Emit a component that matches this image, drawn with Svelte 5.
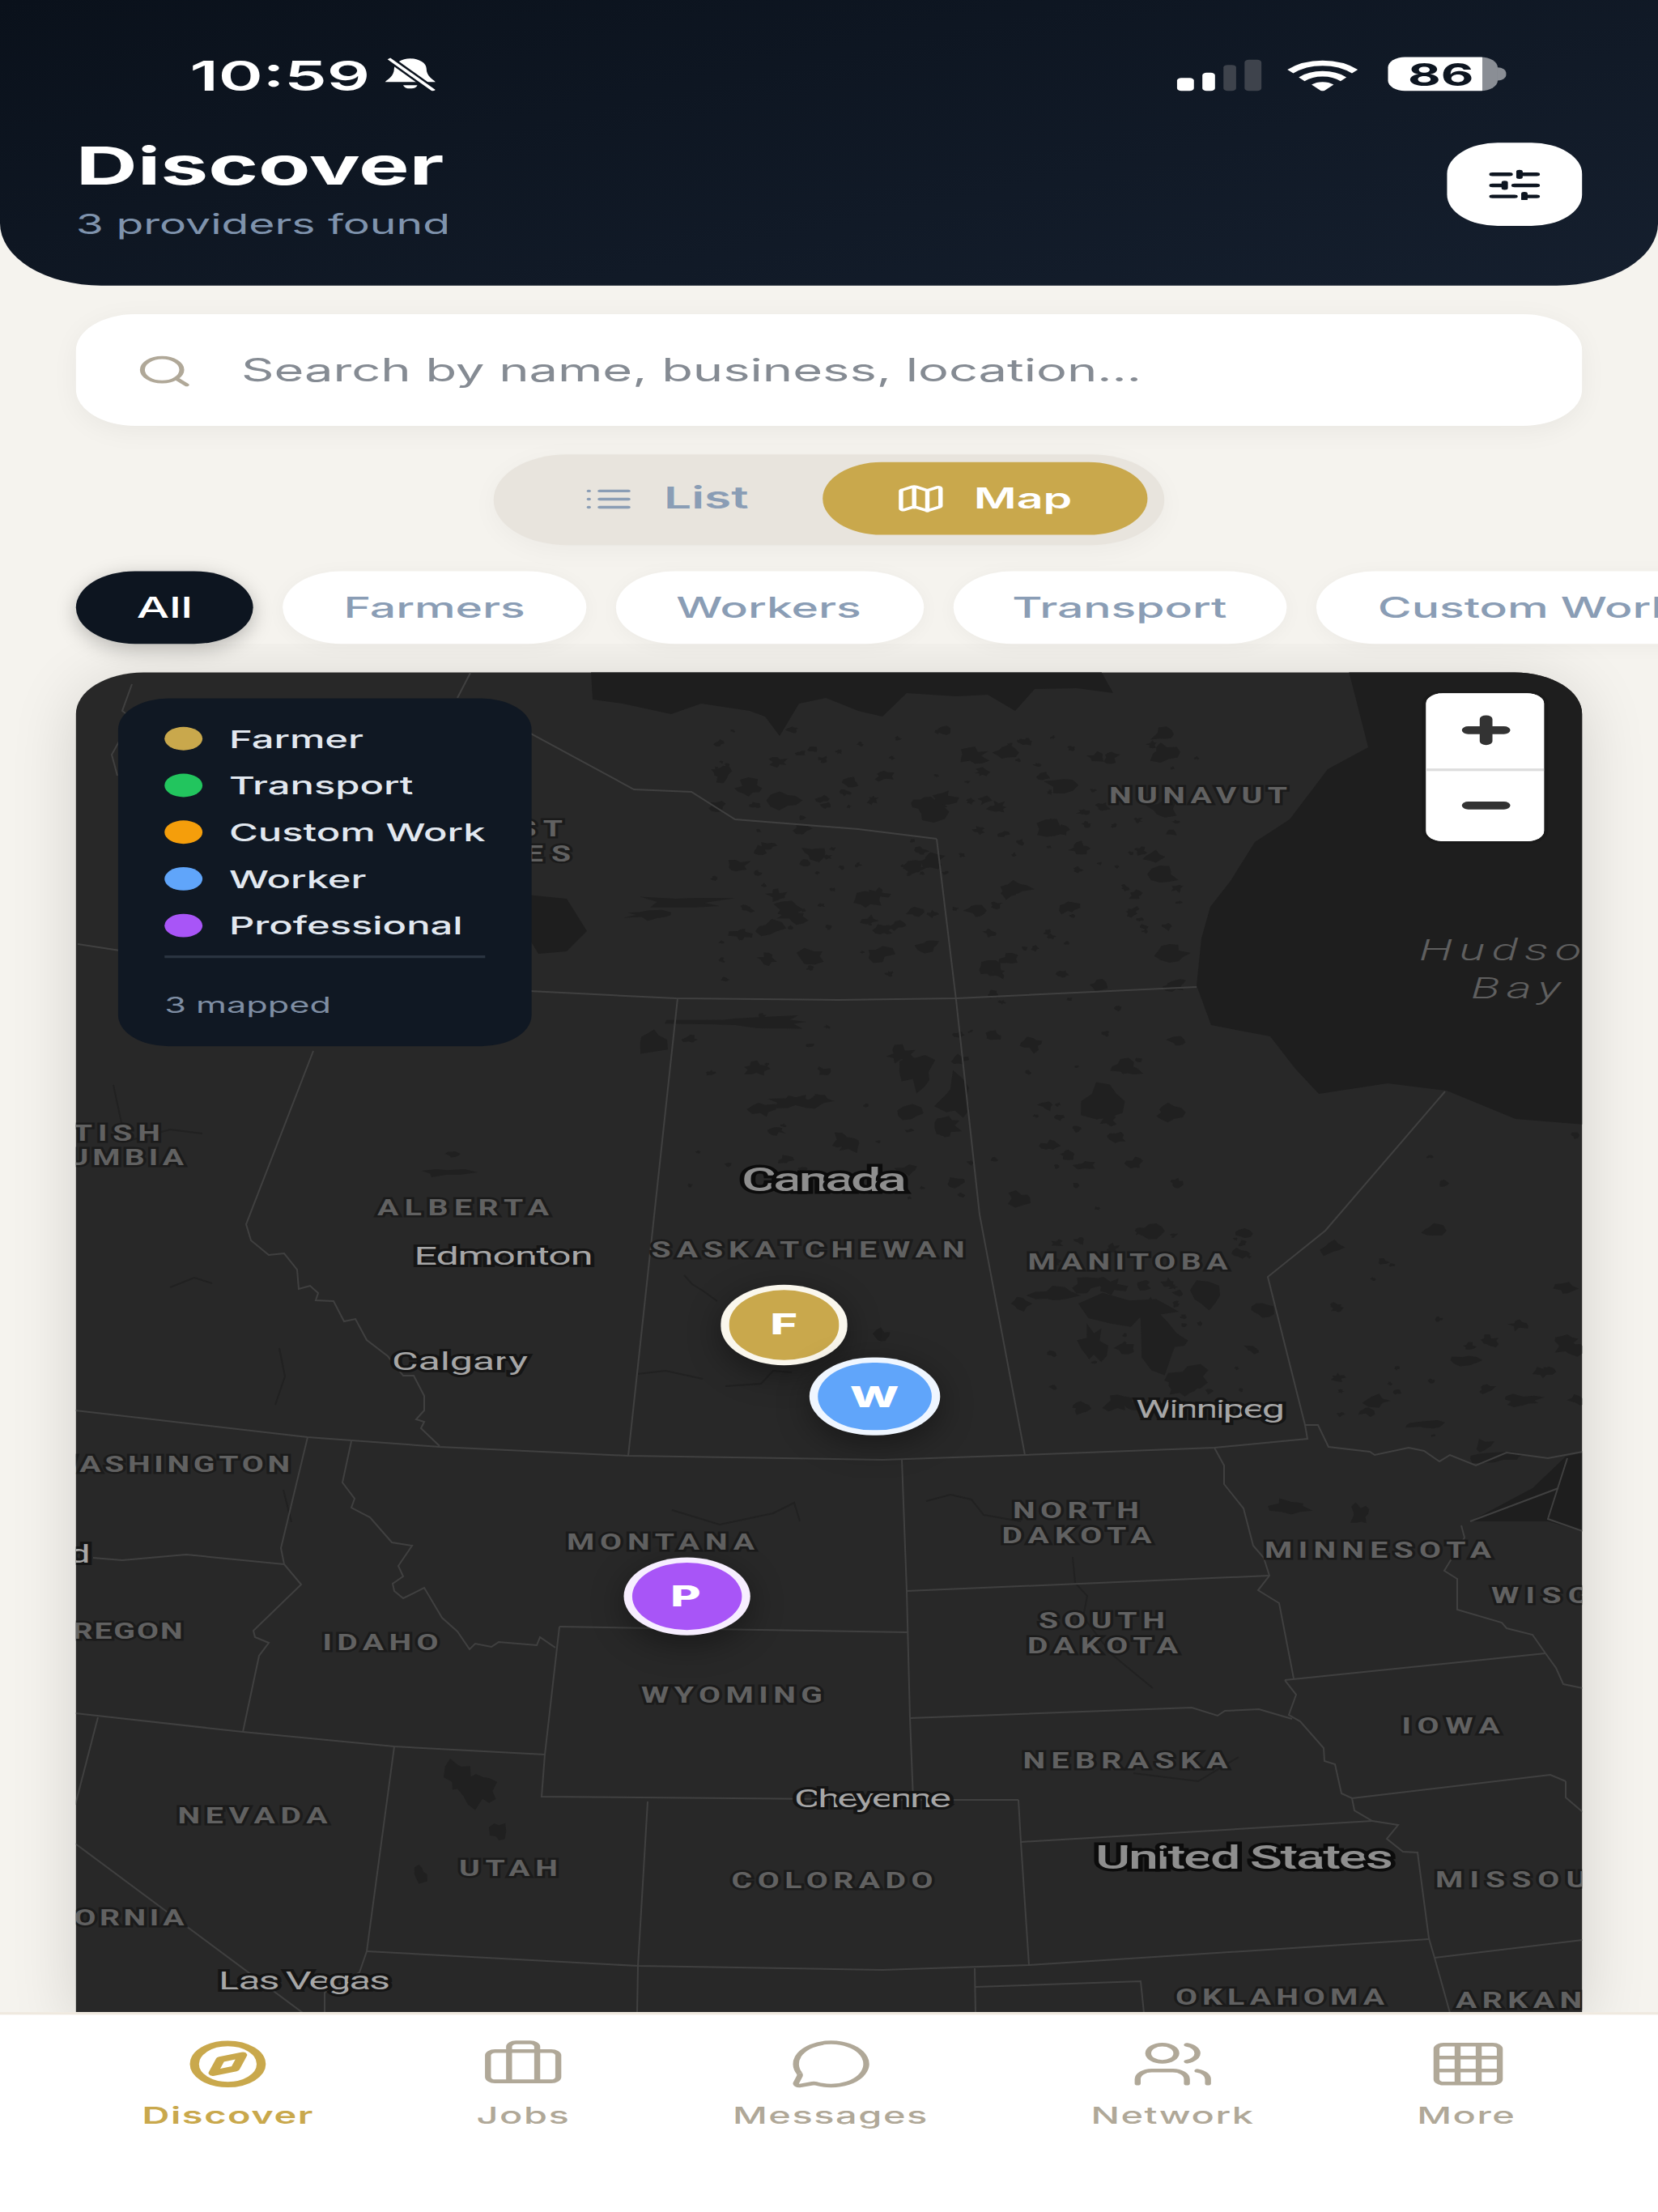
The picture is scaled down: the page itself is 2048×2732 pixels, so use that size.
<script>
	// map geometry is in reference pixels, labels are stretched to match the page scale
	const sx = 1.625;
	const stateSx = 1.45;

	const signal = [
		{ h: 5, on: true },
		{ h: 7, on: true },
		{ h: 9.6, on: false },
		{ h: 12.4, on: false }
	];

	const pills = ['All', 'Farmers', 'Workers', 'Transport', 'Custom Work', 'Professional'];

	const legend = [
		{ name: 'Farmer', color: '#c9a84c' },
		{ name: 'Transport', color: '#22c55e' },
		{ name: 'Custom Work', color: '#f59e0b' },
		{ name: 'Worker', color: '#60a5fa' },
		{ name: 'Professional', color: '#a855f7' }
	];

	const markers = [
		{ letter: 'F', color: '#c9a84c', x: 167.8, y: 251.6 },
		{ letter: 'W', color: '#60a5fa', x: 189.3, y: 279.3 },
		{ letter: 'P', color: '#a855f7', x: 144.5, y: 356 }
	];

	const labels = [
		{ t: 'NUNAVUT', x: 1480, y: 993, w: 220 },
		{ t: 'NORTHWEST', x: 545, y: 1034, w: 300 },
		{ t: 'TERRITORIES', x: 535, y: 1065, w: 340 },
		{ t: 'BRITISH', x: 103, y: 1410, w: 190 },
		{ t: 'COLUMBIA', x: 111, y: 1440, w: 232 },
		{ t: 'ALBERTA', x: 572, y: 1502, w: 212 },
		{ t: 'SASKATCHEWAN', x: 998, y: 1554, w: 387 },
		{ t: 'MANITOBA', x: 1393, y: 1569, w: 247 },
		{ t: 'WASHINGTON', x: 209, y: 1819, w: 298 },
		{ t: 'MONTANA', x: 816, y: 1915, w: 232 },
		{ t: 'NORTH', x: 1329, y: 1876, w: 156 },
		{ t: 'DAKOTA', x: 1330, y: 1907, w: 185 },
		{ t: 'MINNESOTA', x: 1702, y: 1925, w: 280 },
		{ t: 'WISCONSIN', x: 1982, y: 1981, w: 280 },
		{ t: 'SOUTH', x: 1361, y: 2012, w: 156 },
		{ t: 'DAKOTA', x: 1362, y: 2043, w: 186 },
		{ t: 'OREGON', x: 143, y: 2025, w: 165 },
		{ t: 'IDAHO', x: 470, y: 2039, w: 143 },
		{ t: 'WYOMING', x: 904, y: 2104, w: 224 },
		{ t: 'NEBRASKA', x: 1390, y: 2185, w: 253 },
		{ t: 'IOWA', x: 1792, y: 2142, w: 121 },
		{ t: 'NEVADA', x: 312, y: 2253, w: 185 },
		{ t: 'UTAH', x: 628, y: 2318, w: 122 },
		{ t: 'COLORADO', x: 1028, y: 2333, w: 249 },
		{ t: 'MISSOURI', x: 1893, y: 2332, w: 240 },
		{ t: 'CALIFORNIA', x: 95, y: 2379, w: 265 },
		{ t: 'OKLAHOMA', x: 1581, y: 2477, w: 258 },
		{ t: 'ARKANSAS', x: 1923, y: 2481, w: 250 }
	];

	const cities = [
		{ t: 'Edmonton', x: 622, y: 1563, w: 221 },
		{ t: 'Calgary', x: 568, y: 1693, w: 168 },
		{ t: 'Winnipeg', x: 1495, y: 1752, w: 184 },
		{ t: 'Portland', x: 17, y: 1931, w: 190 },
		{ t: 'Cheyenne', x: 1078, y: 2233, w: 194 },
		{ t: 'Las Vegas', x: 376, y: 2458, w: 212 }
	];

	const countries = [
		{ t: 'Canada', x: 1018, y: 1472, w: 204 },
		{ t: 'United States', x: 1537, y: 2309, w: 368 }
	];

	const borders = [
		'93,1742 380,1775 543,1787 776,1798 1090,1803 1266,1797 1500,1788 1615,1777 1612,1760 1628,1760 1641,1787 1692,1793 1698,1797 1740,1788 1759,1792 1778,1805 1791,1797 1823,1810 1861,1794 1912,1801 1955,1793',
		'837,1233 776,1798',
		'1157,1036 1181,1235 1210,1500 1266,1797',
		'654,905 783,975 854,978 908,1012 1060,1024 1157,1036',
		'96,1166 148,1174 300,1205 654,1224 835,1233 1035,1235 1181,1233 1478,1219',
		'581,831 565,862',
		'163,845 151,878 163,887 138,932 145,958',
		'387,1298 304,1512 310,1532 332,1550 351,1548 367,1568 369,1592 383,1588 393,1597 390,1606 412,1607 425,1632 439,1629 453,1655 479,1675 498,1699 511,1699 524,1724 524,1742 514,1753 524,1756 520,1764 543,1786',
		'380,1775 347,1912 351,1932 372,1957 313,2014 315,2022 332,2029 320,2045 300,2139',
		'434,1780 423,1831 438,1851 434,1862 457,1874 484,1905 509,1909 492,1934 498,1947 485,1956 487,1965 498,1974 524,1961 546,1998 565,2015 580,2037 587,2030 607,2034 616,2028 663,2032 667,2022 686,2035',
		'691,2009 1121,2016',
		'691,2009 673,2167 669,2219 1128,2223 1258,2223',
		'1114,1803 1120,1965 1124,2122 1128,2223',
		'1120,1965 1568,1946',
		'1124,2122 1472,2109 1504,2119 1513,2113 1555,2111 1596,2123',
		'1500,1788 1512,1810 1512,1833 1536,1863 1548,1909 1561,1924 1568,1946 1554,1964 1580,1980 1598,2073',
		'1587,2075 1909,2042',
		'1587,2075 1601,2093 1592,2118 1606,2126 1635,2159 1636,2175 1649,2179 1657,2215 1670,2221 1915,2192 1934,2200',
		'1261,2275 1695,2249',
		'1670,2221 1673,2236 1695,2249 1727,2254 1713,2271 1733,2287 1751,2288 1765,2394 1772,2418 1791,2486',
		'453,2410 788,2428 1090,2433 1271,2427 1765,2395',
		'1772,2418 1955,2396',
		'1258,2223 1261,2275 1271,2427',
		'1204,2431 1205,2486',
		'1205,2454 1409,2447 1413,2486',
		'800,2225 788,2428 787,2486',
		'487,2157 453,2410 444,2436 401,2461 401,2486',
		'93,2116 300,2139 487,2157 673,2167',
		'115,1924 151,1927 230,1920 351,1932',
		'121,2121 93,2229',
		'93,2277 374,2486',
		'1805,1884 1809,1899 1784,1940 1800,1950 1800,1988 1855,2004 1861,2011 1893,2019 1909,2042 1922,2060 1931,2080 1955,2085',
		'1816,1879 1925,1838',
		'1936,1801 1912,1876 1955,1891',
		'1934,2200 1934,2220 1955,2238',
		'1785,1348 1637,1520 1566,1577 1612,1760'
	];

	const rivers = [
		'845,1575 855,1586 868,1594 886,1607',
		'787,1697 822,1693 868,1703',
		'896,1712 940,1709 955,1693 978,1695',
		'830,1865 889,1883 955,1869 981,1856 988,1879',
		'1144,1854 1174,1846 1200,1852 1215,1871 1261,1879',
		'1325,1923 1328,1955 1343,1971 1338,1997 1373,2043 1424,2085',
		'140,1340 155,1410 210,1395 250,1400',
		'210,1590 240,1578 262,1585',
		'345,1665 352,1700 340,1735',
		'350,1840 360,1880',
		'1400,2190 1480,2200 1530,2170'
	];

	const water = [
		'1666,829 1690,923 1640,950 1593,1012 1550,1040 1520,1088 1495,1120 1484,1159 1478,1217 1496,1266 1569,1280 1600,1320 1629,1351 1714,1338 1787,1347 1872,1382 1957,1389 1957,829',
		'730,829 1360,829 1375,856 1330,850 1278,851 1254,878 1220,858 1181,860 1120,856 1090,885 1060,878 1020,862 987,869 963,909 945,885 926,878 866,869 829,882 769,869 732,864',
		'1816,1879 1893,1838 1934,1799 1955,1794 1955,1891 1912,1879 1883,1879',
		'650,1105 700,1110 725,1150 700,1175 665,1178 654,1160'
	];

	function blob(x, y, rx, ry, seed) {
		const n = 9 + (seed % 5);
		const pts = [];
		for (let i = 0; i < n; i++) {
			const a = (i / n) * Math.PI * 2;
			const s = Math.sin(seed * 12.9898 + i * 78.233) * 43758.5453;
			const r = 0.45 + 0.9 * (s - Math.floor(s));
			pts.push(`${(x + Math.cos(a) * rx * r).toFixed(1)} ${(y + Math.sin(a) * ry * r).toFixed(1)}`);
		}
		return 'M' + pts.join('L') + 'Z';
	}

	const lakes = [
		[840, 1115, 60, 8], [800, 1130, 30, 6], [925, 1262, 90, 8], [805, 1284, 22, 16],
		[1363, 1360, 26, 22], [1181, 1356, 22, 28], [1132, 1324, 20, 22], [981, 1360, 26, 10],
		[1390, 1620, 50, 24], [1430, 1650, 22, 40], [1470, 1700, 26, 14], [1300, 1600, 26, 10],
		[1350, 1662, 16, 22], [1490, 1600, 20, 18], [1260, 1610, 12, 8], [1090, 1650, 10, 8],
		[565, 2195, 16, 24], [595, 2212, 18, 20], [615, 2262, 9, 12], [520, 2315, 8, 12],
		[1010, 1360, 20, 8], [1040, 1410, 14, 10], [1170, 1390, 16, 12], [1120, 1445, 14, 6],
		[1260, 1480, 14, 9], [1300, 1560, 16, 6], [1595, 1860, 24, 9], [1680, 1870, 12, 12],
		[550, 1448, 30, 6], [560, 1425, 8, 4], [1850, 1800, 36, 7], [1760, 1760, 26, 6],
		[1880, 1730, 24, 7], [1700, 1730, 18, 8], [1810, 1680, 16, 6]
	];

	// lots of little lakes over the shield
	function scatter(count, x0, x1, y0, y1, start) {
		const out = [];
		for (let i = 0; i < count; i++) {
			const a = Math.sin((i + start) * 91.17) * 1753.3;
			const b = Math.sin((i + start) * 37.73) * 9127.1;
			const c = Math.sin((i + start) * 17.31) * 331.7;
			const fa = a - Math.floor(a);
			const fb = b - Math.floor(b);
			const fc = c - Math.floor(c);
			out.push([x0 + (x1 - x0) * fa, y0 + (y1 - y0) * fb, 3 + fc * fc * 16, 2 + fc * fc * 9]);
		}
		return out;
	}

	const lakePaths = [
		...lakes,
		...scatter(170, 880, 1480, 900, 1210, 3),
		...scatter(70, 830, 1470, 1210, 1500, 201),
		...scatter(50, 1280, 1560, 1520, 1740, 401),
		...scatter(30, 1640, 1955, 1400, 1790, 601)
	].map((l, i) => blob(l[0], l[1], l[2], l[3], i + 2));

	function place(l, s) {
		return `translate(${l.x} ${l.y - 1.5}) scale(${s} 1)`;
	}
</script>

<div class="window">
	<div class="phone">
		<header class="header">
			<div class="status">
				<div class="time">
					<span>10:59</span>
					<svg class="bell" viewBox="0 0 24 24">
						<path d="M12 1a6.800 6.800 0 0 0-6.800 6.800c0 5.400-2.700 7.400-3.800 9.200h21.200c-1.100-1.800-3.800-3.800-3.800-9.200A6.800 6.800 0 0 0 12 1z" fill="#fff" />
						<path d="M9 19.200a3.100 3.100 0 0 0 6 0z" fill="#fff" />
						<path d="M3 1l19 22" stroke="#0b131e" stroke-width="3.800" fill="none" />
						<path d="M3 1l19 22" stroke="#fff" stroke-width="1.600" fill="none" />
					</svg>
				</div>
				<div class="indicators">
					<div class="signal">
						{#each signal as bar}
							<span class="bar" class:on={bar.on} style="height: {bar.h}px"></span>
						{/each}
					</div>
					<svg class="wifi" viewBox="0 0 24 17" preserveAspectRatio="none" fill="none" stroke="#fff" stroke-width="2.800">
						<path d="M1.200 6.200a15.400 15.400 0 0 1 21.600 0" />
						<path d="M5 10.300a10 10 0 0 1 14 0" />
						<path d="M12 17l-3.700-3.800a5.400 5.400 0 0 1 7.400 0z" fill="#fff" stroke="none" />
					</svg>
					<div class="battery">
						<div class="cell"><span>86</span></div>
						<span class="nub"></span>
					</div>
				</div>
			</div>
			<div class="title-row">
				<div>
					<h1>Discover</h1>
					<p>3 providers found</p>
				</div>
				<button class="filter" aria-label="Filters">
					<svg viewBox="0 0 24 24" preserveAspectRatio="none" fill="none" stroke="#0d1520" stroke-width="2.600" stroke-linecap="round">
						<path d="M21 4h-7M10 4H3M21 12h-9M8 12H3M21 20h-5M12 20H3M14 2v4M8 10v4M16 18v4" />
					</svg>
				</button>
			</div>
		</header>

		<div class="search">
			<svg viewBox="0 0 24 24" fill="none" stroke="#b0a898" stroke-width="2" stroke-linecap="round">
				<circle cx="11" cy="11" r="8" />
				<path d="m21 21-4.300-4.300" />
			</svg>
			<span>Search by name, business, location...</span>
		</div>

		<div class="toggle-wrap">
			<div class="toggle">
				<div class="seg">
					<svg viewBox="0 0 24 24" fill="none" stroke="currentColor" stroke-width="2" stroke-linecap="round">
						<path d="M3 12h.01M3 18h.01M3 6h.01M8 12h13M8 18h13M8 6h13" />
					</svg>
					<span>List</span>
				</div>
				<div class="seg active">
					<svg viewBox="0 0 24 24" fill="none" stroke="currentColor" stroke-width="2" stroke-linecap="round" stroke-linejoin="round">
						<path d="M14.100 5.100a2 2 0 0 0 1.800 0l3.700-1.900A1 1 0 0 1 21 4.100v12.800a1 1 0 0 1-.6.900l-4.500 2.300a2 2 0 0 1-1.800 0l-4.200-2.100a2 2 0 0 0-1.800 0l-3.700 1.900A1 1 0 0 1 3 19V6.100a1 1 0 0 1 .6-.9l4.500-2.300a2 2 0 0 1 1.800 0zM15 5.800v15M9 3.200v15" />
					</svg>
					<span>Map</span>
				</div>
			</div>
		</div>

		<div class="pills">
			{#each pills as pill, i}
				<span class="pill" class:selected={i === 0}>{pill}</span>
			{/each}
		</div>

		<main class="content">
			<div class="map">
				<svg class="canvas" viewBox="93.8 830.5 1860.4 1657.8" preserveAspectRatio="none">
					<rect x="0" y="800" width="2048" height="1800" fill="#282828" />
					{#each water as w}
						<polygon points={w} fill="#1e1e1e" />
					{/each}
					<path d={lakePaths.join('')} fill="#202020" />
					{#each rivers as r}
						<polyline points={r} fill="none" stroke="#212121" stroke-width="2" />
					{/each}
					{#each borders as b}
						<polyline points={b} fill="none" stroke="#404040" stroke-width="2" />
					{/each}
					{#each labels as l}
						<text class="state" transform={place(l, stateSx)} text-anchor="middle" textLength={l.w / stateSx} lengthAdjust="spacing">{l.t}</text>
					{/each}
					{#each cities as l}
						<text class="city" transform={place(l, sx)} text-anchor="middle" textLength={l.w / sx} lengthAdjust="spacing">{l.t}</text>
					{/each}
					{#each countries as l}
						<text class="country" transform={place(l, sx)} text-anchor="middle" textLength={l.w / sx} lengthAdjust="spacing">{l.t}</text>
					{/each}
					<text class="bay" transform="translate(1753 1186) scale({sx} 1)">Hudson</text>
					<text class="bay" transform="translate(1817 1233) scale({sx} 1)">Bay</text>
				</svg>

				<div class="legend">
					{#each legend as item}
						<div class="legend-row">
							<span class="dot" style="background: {item.color}"></span>
							<span>{item.name}</span>
						</div>
					{/each}
					<div class="mapped">3 mapped</div>
				</div>

				<div class="zoom">
					<button aria-label="Zoom in">
						<svg viewBox="0 0 24 24" fill="none" stroke="#333" stroke-width="5" stroke-linecap="round">
							<path d="M5 12h14M12 5v14" />
						</svg>
					</button>
					<button aria-label="Zoom out">
						<svg viewBox="0 0 24 24" fill="none" stroke="#333" stroke-width="5" stroke-linecap="round">
							<path d="M5 12h14" />
						</svg>
					</button>
				</div>

				{#each markers as m}
					<div class="marker" style="left: {m.x}px; top: {m.y}px; background-color: {m.color}">{m.letter}</div>
				{/each}
			</div>
		</main>

		<nav class="nav">
			<div class="tab active">
				<svg viewBox="0 0 24 24" fill="none" stroke="currentColor" stroke-width="2.600" stroke-linejoin="round">
					<circle cx="12" cy="12" r="9.500" />
					<path d="m16.200 7.800-2.100 6.300-6.300 2.100 2.100-6.300z" />
				</svg>
				<span>Discover</span>
			</div>
			<div class="tab">
				<svg viewBox="0 0 24 24" fill="none" stroke="currentColor" stroke-width="1.700" stroke-linejoin="round">
					<path d="M16 20V4a2 2 0 0 0-2-2h-4a2 2 0 0 0-2 2v16" />
					<rect x="2" y="6" width="20" height="14" rx="2" />
				</svg>
				<span>Jobs</span>
			</div>
			<div class="tab">
				<svg viewBox="0 0 24 24" fill="none" stroke="currentColor" stroke-width="1.700" stroke-linejoin="round">
					<path d="M2.992 16.342a2 2 0 0 1 .094 1.167l-1.065 3.290a1 1 0 0 0 1.236 1.168l3.413-.998a2 2 0 0 1 1.099.092 10 10 0 1 0-4.777-4.719" />
				</svg>
				<span>Messages</span>
			</div>
			<div class="tab">
				<svg viewBox="0 0 24 24" fill="none" stroke="currentColor" stroke-width="1.700" stroke-linecap="round">
					<path d="M16 21v-2a4 4 0 0 0-4-4H6a4 4 0 0 0-4 4v2" />
					<circle cx="9" cy="7" r="4" />
					<path d="M22 21v-2a4 4 0 0 0-3-3.870M16 3.130a4 4 0 0 1 0 7.750" />
				</svg>
				<span>Network</span>
			</div>
			<div class="tab">
				<svg viewBox="0 0 24 24" fill="none" stroke="currentColor" stroke-width="1.700">
					<rect x="3" y="3" width="18" height="18" rx="2" />
					<path d="M3 9h18M3 15h18M9 3v18M15 3v18" />
				</svg>
				<span>More</span>
			</div>
		</nav>
	</div>
</div>

<style>
	:global(body) {
		background: #f5f3ee;
	}

	.window {
		width: 2048px;
		height: 2732px;
		overflow: hidden;
	}

	/* the page is a 393x852 phone layout stretched over the full window */
	.phone {
		width: 393px;
		height: 852px;
		display: flex;
		flex-direction: column;
		background: #f5f3ee;
		overflow: hidden;
		transform: scale(5.2112, 3.2066);
		transform-origin: 0 0;
		font-family: Inter, 'Liberation Sans', sans-serif;
	}

	.header {
		height: 110.300px;
		flex-shrink: 0;
		box-sizing: border-box;
		padding: 22px 18px 0;
		background: linear-gradient(160deg, #0a111b 0%, #151f2e 100%);
		border-radius: 0 0 24px 24px;
	}

	.status {
		display: flex;
		justify-content: space-between;
		align-items: center;
		height: 13.400px;
		padding: 0 18px 0 27px;
	}

	.time {
		display: flex;
		align-items: center;
		gap: 2.500px;
		color: #fff;
		font-size: 16px;
		font-weight: 600;
	}

	.bell {
		width: 14.500px;
		height: 13.500px;
	}

	.indicators {
		display: flex;
		align-items: center;
		gap: 6.800px;
	}

	.signal {
		display: flex;
		align-items: flex-end;
		gap: 2px;
		height: 12.400px;
	}

	.bar {
		width: 3.300px;
		border-radius: 1px;
		background: #3e434c;
	}

	.bar.on {
		background: #fff;
	}

	.wifi {
		width: 17px;
		height: 12.400px;
	}

	.battery {
		display: flex;
		align-items: center;
		gap: 0.500px;
	}

	.cell {
		width: 25.300px;
		height: 13.300px;
		border-radius: 4px;
		background: linear-gradient(90deg, #fff 86%, #8a8e95 86%);
		display: flex;
		align-items: center;
		padding-left: 4.500px;
		box-sizing: border-box;
		color: #0d1520;
		font-size: 12px;
		font-weight: 700;
	}

	.nub {
		width: 2px;
		height: 4.500px;
		border-radius: 0 2px 2px 0;
		background: #8a8e95;
	}

	.title-row {
		display: flex;
		justify-content: space-between;
		align-items: flex-start;
		margin-top: 15.200px;
	}

	h1 {
		margin: 0;
		color: #fff;
		font-size: 20.200px;
		font-weight: 700;
		line-height: 26px;
	}

	.title-row p {
		margin: 2.300px 0 0;
		color: #7f93ad;
		font-size: 10.600px;
		line-height: 16px;
	}

	.filter {
		width: 32.200px;
		height: 32.200px;
		margin-top: 4.400px;
		border: none;
		padding: 0;
		border-radius: 12px;
		background: #fff;
		display: flex;
		align-items: center;
		justify-content: center;
	}

	.filter svg {
		width: 14px;
		height: 12.800px;
	}

	.search {
		flex-shrink: 0;
		margin: 11.100px 18px 0;
		height: 42.600px;
		box-sizing: border-box;
		padding-left: 13.800px;
		display: flex;
		align-items: center;
		gap: 11.400px;
		background: #fff;
		border-radius: 14px;
		box-shadow: 0 2px 8px rgba(0, 0, 0, 0.05);
		color: #858b93;
		font-size: 12.130px;
	}

	.search svg {
		width: 14px;
		height: 14px;
	}

	.toggle-wrap {
		flex-shrink: 0;
		display: flex;
		justify-content: center;
		margin-top: 10.600px;
	}

	.toggle {
		display: flex;
		padding: 3.600px;
		height: 35px;
		box-sizing: border-box;
		background: #e8e4dd;
		border-radius: 17.500px;
		box-shadow: 0 2px 8px rgba(0, 0, 0, 0.04);
	}

	.seg {
		display: flex;
		align-items: center;
		justify-content: center;
		gap: 6.500px;
		padding: 0 17.800px;
		border-radius: 14px;
		color: #8a9db5;
		font-size: 11.600px;
		font-weight: 600;
	}

	.seg svg {
		width: 12.500px;
		height: 12.500px;
	}

	.seg.active {
		background: #c9a84c;
		color: #fff;
		font-size: 11px;
		padding: 0 18.300px 0 16.600px;
	}

	.pills {
		flex-shrink: 0;
		display: flex;
		gap: 7px;
		margin-top: 10.600px;
		padding: 0 18px;
		height: 27.400px;
	}

	.pill {
		flex-shrink: 0;
		display: flex;
		align-items: center;
		padding: 0 14.400px;
		background: #fff;
		border-radius: 14px;
		box-shadow: 0 1px 6px rgba(0, 0, 0, 0.04);
		color: #8a9db5;
		font-size: 10.950px;
		font-weight: 500;
	}

	.pill.selected {
		background: #0d1520;
		color: #fff;
		box-shadow: 0 2px 6px rgba(0, 0, 0, 0.25);
	}

	.content {
		flex: 1;
		min-height: 0;
		overflow: hidden;
		padding-top: 11.100px;
	}

	.map {
		position: relative;
		margin: 0 18px;
		height: 517px;
		border-radius: 16px 16px 0 0;
		box-shadow: 0 4px 20px rgba(0, 0, 0, 0.14);
	}

	.canvas {
		position: absolute;
		inset: 0;
		width: 100%;
		height: 100%;
		border-radius: 16px 16px 0 0;
	}

	.state {
		font-family: Roboto, sans-serif;
		font-size: 27px;
		font-weight: 700;
		fill: #616161;
		stroke: #1b1b1b;
		stroke-width: 5px;
		paint-order: stroke;
	}

	.city {
		font-family: Roboto, sans-serif;
		font-size: 31px;
		fill: #a6a6a6;
		stroke: #151515;
		stroke-width: 6px;
		paint-order: stroke;
	}

	.country {
		font-family: Roboto, sans-serif;
		font-size: 41px;
		font-weight: 500;
		fill: #8e8e8e;
		stroke: #0c0c0c;
		stroke-width: 7px;
		paint-order: stroke;
	}

	.bay {
		font-family: Roboto, sans-serif;
		font-size: 37px;
		font-style: italic;
		font-weight: 300;
		letter-spacing: 5px;
		fill: #5f5f5f;
	}

	.legend {
		position: absolute;
		left: 10px;
		top: 10.200px;
		width: 98px;
		height: 134.500px;
		box-sizing: border-box;
		padding: 6.800px 11px 0;
		background: #101823;
		border-radius: 12px;
		color: #e2e8f0;
		font-size: 9.400px;
		font-weight: 500;
		white-space: nowrap;
	}

	.legend-row {
		display: flex;
		align-items: center;
		gap: 6.300px;
		height: 17.900px;
	}

	.dot {
		width: 9px;
		height: 9px;
		border-radius: 50%;
		flex-shrink: 0;
	}

	.mapped {
		margin-top: 2.800px;
		border-top: 0.700px solid #2a3441;
		padding-top: 12.100px;
		color: #7f8ea3;
		font-size: 8.300px;
		font-weight: 400;
		line-height: 13px;
	}

	.zoom {
		position: absolute;
		right: 9px;
		top: 8.400px;
		width: 28.400px;
		border-radius: 4px;
		background: #fff;
		overflow: hidden;
		box-shadow: 0 0 0 1px rgba(0, 0, 0, 0.1);
	}

	.zoom button {
		display: flex;
		align-items: center;
		justify-content: center;
		width: 100%;
		height: 28.500px;
		padding: 0;
		border: none;
		background: #fff;
	}

	.zoom button + button {
		border-top: 1px solid #ddd;
	}

	.zoom svg {
		width: 14.500px;
		height: 14.500px;
	}

	.marker {
		position: absolute;
		width: 30.300px;
		height: 30.300px;
		box-sizing: border-box;
		display: flex;
		align-items: center;
		justify-content: center;
		border: 2.700px solid rgba(255, 255, 255, 0.9);
		border-radius: 50%;
		box-shadow: 0 3px 10px rgba(0, 0, 0, 0.4);
		color: #fff;
		font-size: 11px;
		font-weight: 800;
		transform: translate(-50%, -50%);
	}

	.nav {
		flex-shrink: 0;
		height: 76.700px;
		box-sizing: border-box;
		display: flex;
		justify-content: space-between;
		padding: 8.600px 33.700px 0;
		background: #fff;
		border-top: 1px solid #efe9df;
		position: relative;
	}

	.tab {
		display: flex;
		flex-direction: column;
		align-items: center;
		gap: 4.400px;
		color: #b0a898;
		font-size: 9px;
		font-weight: 500;
		letter-spacing: 0.3px;
	}

	.tab svg {
		width: 20px;
		height: 20px;
	}

	.tab.active {
		color: #c9a84c;
		font-weight: 600;
	}
</style>
